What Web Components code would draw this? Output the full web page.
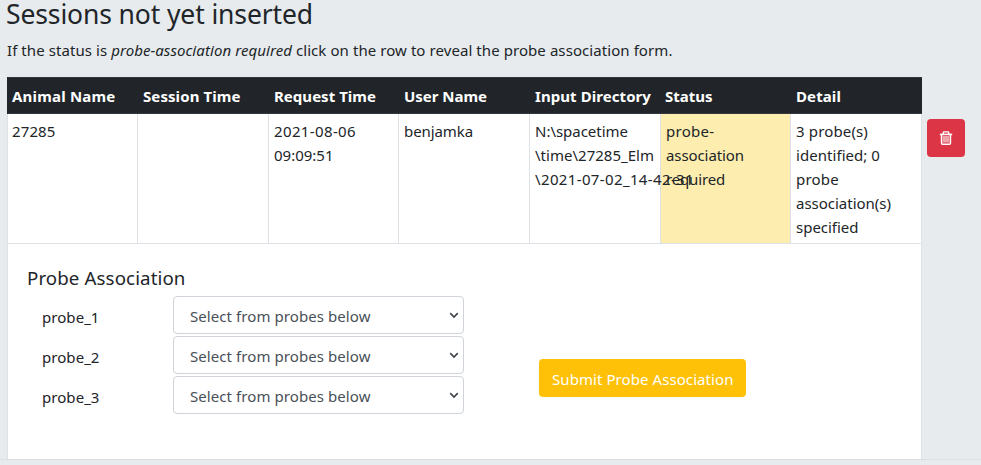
<!DOCTYPE html>
<html lang="en">
<head>
<meta charset="utf-8">
<title>Sessions</title>
<style>
html,body{margin:0;height:100%;overflow:hidden}
body{background:#e7ebee;color:#212529;font:15px/24px "Noto Sans","Open Sans",sans-serif}
</style>
</head>
<body>
<sessions-page></sessions-page>
<script>
const define = (name, html, setup) => customElements.define(name, class extends HTMLElement {
  constructor() {
    super();
    this.attachShadow({mode: 'open'}).innerHTML = html;
  }
  connectedCallback() { if (setup) setup(this); }
});

// A single line of text tracked to a given advance width.
define('text-line', `<style>
:host{display:block;white-space:pre;width:max-content}
span{display:inline-block}
</style><span><slot></slot></span>`, el => {
  const span = el.shadowRoot.querySelector('span');
  const target = parseFloat(el.getAttribute('width'));
  if (target) {
    const spacing = (target - span.getBoundingClientRect().width) / el.textContent.length;
    span.style.letterSpacing = spacing.toFixed(4) + 'px';
  }
});

define('head-cell', `<style>
:host{display:block;box-sizing:border-box;height:37px;padding:6px 0 0 5px;background:#212529;color:#fff;font-weight:700;border:solid #32383e;border-width:1px 0}
</style><slot></slot>`);

define('data-cell', `<style>
:host{display:block;box-sizing:border-box;height:130px;padding:5px 0 0 5px;border-right:1px solid #dee2e6;border-bottom:1px solid #dee2e6}
:host([warn]){background:#fdeeaf}
</style><slot></slot>`);

define('probe-select', `<style>
:host{display:flex;box-sizing:border-box;width:291px;height:38px;padding:0 4px 0 16px;align-items:center;justify-content:space-between;border:1px solid #ced4da;border-radius:4px;background:#fff;color:#495057}
text-line{padding-top:2px}
svg{display:block}
</style><text-line width="180.5">Select from probes below</text-line>
<svg width="10" height="8" viewBox="0 0 10 8" fill="none" stroke="#42484e" stroke-width="1.7"><path d="M1.2 2.2 5 6 8.8 2.2"/></svg>`);

define('probe-row', `<style>
:host{display:grid;grid-template-columns:131px 291px;height:40px;align-items:start}
.label{padding:9px 0 0}
</style><div class="label"><slot></slot></div><probe-select></probe-select>`);

define('submit-button', `<style>
:host{display:flex;box-sizing:border-box;width:207px;height:38px;padding:2px 0 0 13px;align-items:center;border-radius:4px;background:#ffc107;color:#fff}
</style><slot></slot>`);

define('delete-button', `<style>
:host{display:grid;place-items:center;width:38px;height:38px;border-radius:4px;background:#dc3545}
svg{display:block}
</style><svg width="14" height="16" viewBox="0 0 14 16" fill="none" stroke="#fff">
<path d="M.8 4.4H13.2" stroke-width="1.6"/><path d="M4.3 4V2.6Q4.3 1.9 5 1.9H9Q9.7 1.9 9.7 2.6V4" stroke-width="1.4"/>
<path d="M2.6 4.5V13.3Q2.6 14.3 3.5 14.3H10.5Q11.4 14.3 11.4 13.3V4.5" stroke-width="1.6"/><path d="M5 6V12.5M7 6V12.5M9 6V12.5" stroke-width="1.1"/></svg>`);

define('probe-form', `<style>
:host{display:flex;box-sizing:border-box;height:215px;padding:20px 0 0 19px;align-items:flex-start;border-right:1px solid #dee2e6}
.title{font-size:18.7px;padding-top:2px;height:30px;box-sizing:border-box}
.rows{padding-left:15px;padding-top:2px}
submit-button{margin:95px 0 0 75px}
</style>
<div><text-line class="title" width="158.5">Probe Association</text-line>
<div class="rows">
<probe-row><text-line width="57.5">probe_1</text-line></probe-row>
<probe-row><text-line width="57.5">probe_2</text-line></probe-row>
<probe-row><text-line width="57.5">probe_3</text-line></probe-row>
</div></div>
<submit-button><text-line width="181.5">Submit Probe Association</text-line></submit-button>`);

define('sessions-table', `<style>
:host{display:block;width:915px}
.grid{display:grid;grid-template-columns:130px 131px 130px 131px 131px 130px 131px}
.head{padding-left:1px;background:#212529}
.body{background:#fff;border-left:1px solid #dee2e6}
.front{position:relative;z-index:1}
</style>
<div class="grid head">
<head-cell style="padding-left:4px"><text-line width="103.5">Animal Name</text-line></head-cell>
<head-cell><text-line width="97.5">Session Time</text-line></head-cell>
<head-cell><text-line width="102">Request Time</text-line></head-cell>
<head-cell><text-line width="83">User Name</text-line></head-cell>
<head-cell><text-line width="116">Input Directory</text-line></head-cell>
<head-cell style="padding-left:4px"><text-line width="47.5">Status</text-line></head-cell>
<head-cell><text-line width="45">Detail</text-line></head-cell>
</div>
<div class="body">
<div class="grid">
<data-cell style="padding-left:4px"><text-line width="43.5">27285</text-line></data-cell>
<data-cell></data-cell>
<data-cell><text-line width="82">2021-08-06</text-line><text-line width="59.5">09:09:51</text-line></data-cell>
<data-cell><text-line width="69">benjamka</text-line></data-cell>
<data-cell class="front"><text-line width="93">N:\\spacetime</text-line><text-line width="119">\\time\\27285_Elm</text-line><text-line width="159">\\2021-07-02_14-42-31</text-line></data-cell>
<data-cell warn><text-line width="48.5">probe-</text-line><text-line width="78">association</text-line><text-line width="59">required</text-line></data-cell>
<data-cell><text-line width="72">3 probe(s)</text-line><text-line width="84">identified; 0</text-line><text-line width="43">probe</text-line><text-line width="95">association(s)</text-line><text-line width="62.5">specified</text-line></data-cell>
</div>
<probe-form></probe-form>
</div>`);

define('sessions-page', `<style>
:host{display:block}
h1{margin:0;padding:0 0 0 6px;height:38px;box-sizing:border-box;font-size:26.5px;line-height:28px;font-weight:400}
p{margin:0;padding:0 0 0 7px;height:39px;box-sizing:border-box}
.area{display:flex;gap:5px;padding-left:7px;height:383px;box-sizing:border-box;border-bottom:1px solid #dcdfe2}
delete-button{margin-top:42px}
</style>
<h1><text-line width="307">Sessions not yet inserted</text-line></h1>
<p><text-line width="665.5">If the status is <em>probe-association required</em> click on the row to reveal the probe association form.</text-line></p>
<div class="area"><sessions-table></sessions-table><delete-button></delete-button></div>`);
</script>
</body>
</html>
